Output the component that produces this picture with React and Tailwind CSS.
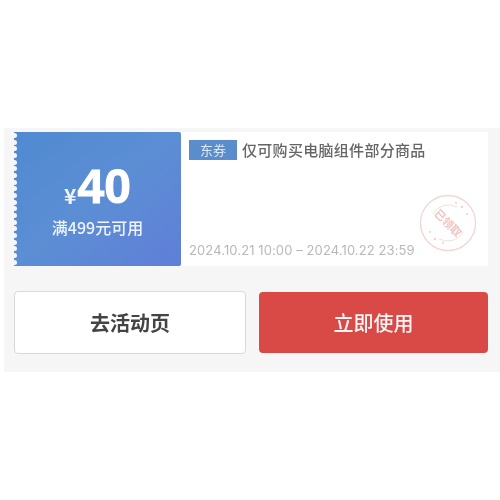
import React from "react";

const cjk = "font-['Noto_Sans_CJK_SC','Noto_Sans',sans-serif]";

function Stamp() {
  return (
    <svg className="absolute left-[238px] top-[62px]" width="58" height="58" viewBox="0 0 58 58" fill="none">
      <circle cx="29" cy="29" r="27.5" stroke="#f3d5d3" strokeWidth="1.3" />
      <path d="M14 20 A18 18 0 0 1 38 13" stroke="#f5dedc" strokeWidth="1" />
      <path d="M44 38 A18 18 0 0 1 20 45" stroke="#f5dedc" strokeWidth="1" />
      <circle cx="43" cy="13" r="1.2" fill="#f1cfcc" />
      <circle cx="37" cy="9" r="1" fill="#f1cfcc" />
      <circle cx="48" cy="20" r="1" fill="#f1cfcc" />
      <circle cx="11" cy="38" r="1" fill="#f1cfcc" />
      <circle cx="16" cy="45" r="1.2" fill="#f1cfcc" />
      <circle cx="24" cy="49" r="1" fill="#f1cfcc" />
      <text
        x="29"
        y="33"
        textAnchor="middle"
        fontSize="11"
        fontWeight="700"
        fill="#f0c4c1"
        fontFamily="'Noto Sans CJK SC', sans-serif"
        transform="rotate(45 29 29)"
      >
        已领取
      </text>
    </svg>
  );
}

export default function App() {
  return (
    <div className={`${cjk} h-[500px] w-[500px] bg-white pt-[128px] pl-1 blur-[0.6px]`}>
      <div className="h-[244px] w-[496px] bg-[#f6f6f6] pt-1 pl-[10px]">
        <div className="flex h-[134px] w-[474px]">
          <div className="relative flex w-[167px] flex-col items-center rounded-r-[2px] bg-gradient-to-br from-[#4f8ad0] via-[#5c8ed4] to-[#5f7ed8] pt-[30px] text-white">
            <div className="absolute top-0 bottom-0 -left-[2px] flex flex-col justify-between py-[1px]">
              {Array.from({ length: 20 }).map((_, i) => (
                <span key={i} className="h-[5px] w-[5px] rounded-full bg-[#f6f6f6]" />
              ))}
            </div>
            <div className="flex h-[50px] items-end">
              <span className="mr-[1px] mb-[6px] text-[21px] leading-none font-bold text-white/90">¥</span>
              <span className="font-['Liberation_Sans',sans-serif] text-[48px] leading-[50px] font-bold [-webkit-text-stroke:1px_white]">40</span>
            </div>
            <div className="mt-[5px] text-[16px] leading-5 font-medium text-white/90">满499元可用</div>
          </div>
          <div className="relative flex-1 bg-white pt-[8px] pl-[8px]">
            <div className="flex items-center">
              <span className="flex h-5 w-12 items-center justify-center bg-[#5a8dcb] text-[13px] text-white/80">东券</span>
              <span className="ml-[5px] text-[15px] leading-5 font-medium tracking-[0.3px] text-[#666666]">仅可购买电脑组件部分商品</span>
            </div>
            <div className="mt-[80px] font-['Inter',sans-serif] text-[13px] leading-5 tracking-[0.1px] whitespace-pre text-[#b8b8b8]">
              2024.10.21 10:00 – 2024.10.22 23:59
            </div>
            <Stamp />
          </div>
        </div>
        <div className="mt-[25px] flex h-[63px] w-[474px] items-center justify-between">
          <button className="h-[63px] w-[232px] rounded-[4px] border-[1.5px] border-[#d9d9d9] bg-white text-[20px] font-bold text-[#444444]">
            去活动页
          </button>
          <button className="h-[61px] w-[229px] rounded-[4px] bg-[#d94a47] text-[20px] font-medium text-white/95">
            立即使用
          </button>
        </div>
      </div>
    </div>
  );
}
